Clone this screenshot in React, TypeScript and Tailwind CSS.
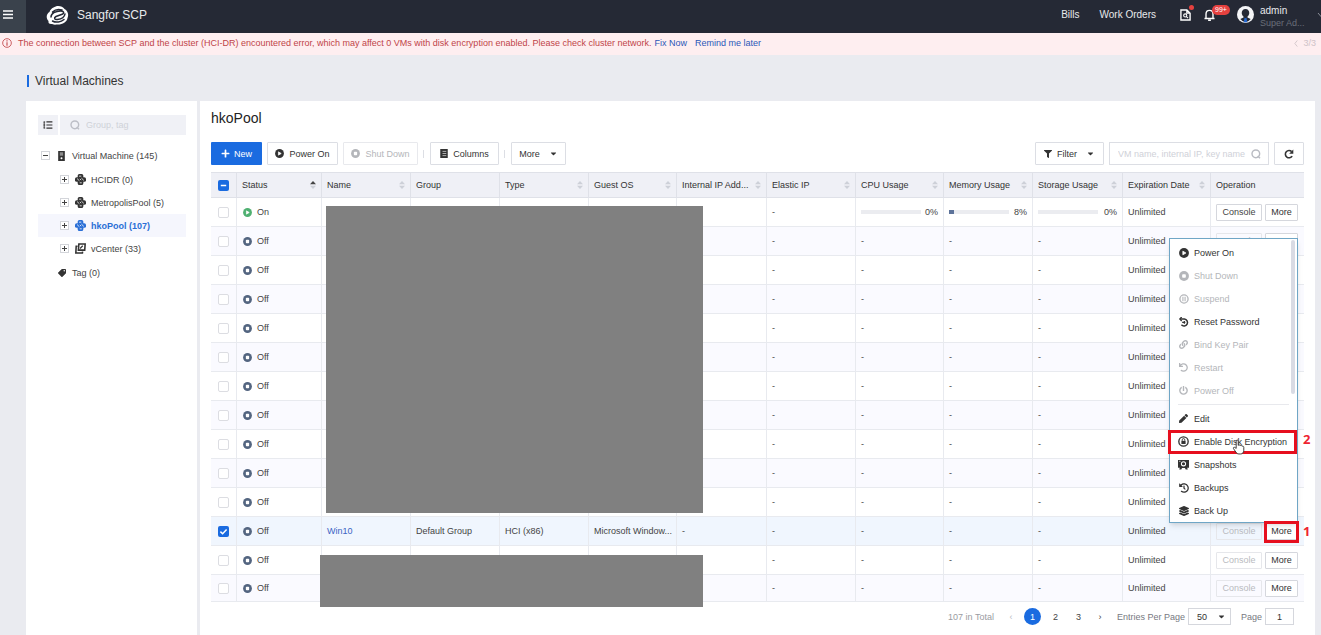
import React from "react";
import {
  FaCaretDown, FaFilter, FaHistory, FaLayerGroup, FaLink, FaPen, FaPlus,
  FaPowerOff, FaTag, FaUndo,
} from "react-icons/fa";

type IconProps = { className?: string };

const Logo = () => (
  <svg viewBox="0 0 46 40" className="h-5 w-6" aria-hidden="true">
    <path fill="#fff" d="M14 5C20 0 32 1 36 8c7 4 9 12 6 18-1 8-10 13-19 13-5 0-7 1-12-1-5 1-8-2-7-6C-1 27-1 18 6 14c1-4 4-7 8-9Z" />
    <path fill="none" stroke="#252935" strokeWidth="3" strokeLinecap="round" d="M9 24c0-7 9-12 19-12 8 0 8 5 2 7l-11 4c-5 3-3 7 3 6 8-1 14-5 15-11M12 14c5-5 13-6 19-4M12 32c7 4 17 2 23-3" />
  </svg>
);

const SearchIcon = ({ className }: IconProps) => (
  <svg viewBox="0 0 12 12" className={className} fill="none" stroke="currentColor" strokeWidth="1.7" aria-hidden="true">
    <circle cx="5.8" cy="5.8" r="4.6" />
    <path d="m8 8.400 2.800 2.600" />
  </svg>
);

const PlayDisc = ({ className }: IconProps) => (
  <svg viewBox="0 0 12 12" className={className} aria-hidden="true">
    <circle cx="6" cy="6" r="5.9" fill="currentColor" />
    <path d="M4.6 3.8v4.4L8.300 6Z" fill="#fff" stroke="#fff" strokeWidth=".9" strokeLinejoin="round" />
  </svg>
);

const StopDisc = ({ className }: IconProps) => (
  <svg viewBox="0 0 12 12" className={className} aria-hidden="true">
    <circle cx="6" cy="6" r="5.9" fill="currentColor" />
    <rect x="3.8" y="3.8" width="4.4" height="4.4" rx="1" fill="#fff" />
  </svg>
);

const PauseDisc = ({ className }: IconProps) => (
  <svg viewBox="0 0 12 12" className={className} fill="none" stroke="currentColor" aria-hidden="true">
    <circle cx="6" cy="6" r="4.9" strokeWidth="1.6" />
    <path d="M4.7 3.200v5.600M7.3 3.200v5.600" strokeWidth="1.3" />
  </svg>
);

const ResetIcon = ({ className }: IconProps) => (
  <svg viewBox="0 0 12 12" className={className} fill="none" stroke="currentColor" strokeWidth="1.8" aria-hidden="true">
    <path d="M1 2.400h5.500a4.200 4.200 0 1 1-3.600 7" />
    <path d="M3.200 0 .9 2.400l2.300 2.400" strokeWidth="1.500" />
    <path d="M3.800 6.300h3.800M6.400 4.700v3.400" strokeWidth="1.500" />
  </svg>
);

const LockDisc = ({ className }: IconProps) => (
  <svg viewBox="0 0 12 12" className={className} aria-hidden="true">
    <circle cx="6" cy="6" r="5.1" fill="none" stroke="currentColor" strokeWidth="1.5" />
    <rect x="3.7" y="5.3" width="4.6" height="3.4" fill="currentColor" />
    <path d="M4.6 5.3V4.2a1.4 1.4 0 0 1 2.8 0v1.1" fill="none" stroke="currentColor" strokeWidth="1" />
  </svg>
);

const SnapshotIcon = ({ className }: IconProps) => (
  <svg viewBox="0 0 12 12" className={className} aria-hidden="true">
    <path fill="currentColor" d="M0 1h12v8.600h-2l.7 1.800H8.400L7.600 9.800H4.400l-.8 1.600H1.300L2 9.600H0Z" />
    <circle cx="6" cy="5.2" r="2.3" fill="none" stroke="#fff" strokeWidth="1.1" />
    <path d="M1.200 2.500h1.500" stroke="#fff" strokeWidth=".8" />
  </svg>
);

const ColumnsIcon = ({ className }: IconProps) => (
  <svg viewBox="0 0 10 12" className={className} aria-hidden="true">
    <path fill="currentColor" d="M0 0h10v12H0Z" />
    <path d="M3 3.200h5M3 6h5M3 8.800h5" stroke="#fff" strokeWidth=".8" />
  </svg>
);

const RefreshIcon = ({ className }: IconProps) => (
  <svg viewBox="0 0 12 12" className={className} aria-hidden="true">
    <path d="M9.800 8.500A4.400 4.400 0 1 1 9.200 3.100" fill="none" stroke="currentColor" strokeWidth="1.9" />
    <path d="M11.200.6v5H6.200Z" fill="currentColor" />
  </svg>
);

const ServerIcon = ({ className }: IconProps) => (
  <svg viewBox="0 0 10 12" className={className} aria-hidden="true">
    <path fill="currentColor" d="M1 0h8v12H1Z" />
    <path d="M3 2.500h4M3 4.700h4" stroke="#fff" strokeWidth=".9" />
    <circle cx="5" cy="8.600" r="1.200" fill="#fff" />
  </svg>
);

const PoolIcon = ({ className }: IconProps) => (
  <svg viewBox="0 0 14 14" className={className} aria-hidden="true">
    <g fill="currentColor">
      <rect x="3.5" y="0" width="7" height="5.600" rx="2" />
      <rect x="3.5" y="8.400" width="7" height="5.600" rx="2" />
      <rect x="0" y="4" width="6" height="6" rx="2.200" />
      <rect x="8" y="4" width="6" height="6" rx="2.200" />
      <path d="M3.500 3.500h7v7h-7Z" />
    </g>
    <path d="M5.200 2.800 8 2.700M2.600 5.800l3 2.800M8.200 5.300l3 2.800M6 11.200h2.600M6.200 6.200l1.600 1.600" fill="none" stroke="#fff" strokeWidth="1" />
  </svg>
);

const CopiesIcon = ({ className }: IconProps) => (
  <svg viewBox="0 0 12 12" className={className} fill="none" stroke="currentColor" strokeWidth="1.700" aria-hidden="true">
    <path d="M4.200 1h6.900l-.5 6.800H3.700Z" />
    <path d="M2.800 3.600H1.300L.9 11h7.200l.2-1.600" />
    <path d="m5.500 6 3-3" strokeWidth="1.200" />
  </svg>
);

const TreeListIcon = ({ className }: IconProps) => (
  <svg viewBox="0 0 12 10" className={className} fill="none" stroke="currentColor" strokeWidth="1.500" aria-hidden="true">
    <path d="M4 1.200h7.500M4 5h7.500M4 8.800h7.500" />
    <path d="M.5 1.200h2M.5 5h2M.5 8.800h2M1.200 1v8" strokeWidth="1.200" />
  </svg>
);

const Expander = ({ open, label }: { open?: boolean; label: string }) => (
  <button type="button" aria-label={label} className="grid size-[9px] shrink-0 place-items-center border border-[#d3d5da] bg-white text-[#444]">
    <svg viewBox="0 0 7 7" className="size-[7px]" stroke="currentColor" aria-hidden="true">
      <path d={open ? "M1 3.500h5" : "M1 3.500h5M3.500 1v5"} />
    </svg>
  </button>
);

const Sorter = ({ active }: { active?: boolean }) => (
  <svg viewBox="0 0 6 8" className="h-2 w-1.5 shrink-0" aria-hidden="true">
    <path d="M0 3.200 3 0l3 3.200Z" fill={active ? "#444" : "#cdd0d8"} />
    <path d="M0 4.800 3 8l3-3.200Z" fill="#cdd0d8" />
  </svg>
);

const Check = ({ state, label }: { state: "off" | "on" | "mixed"; label: string }) => (
  <span className="relative ml-[7px] block size-[11px]">
    <input
      type="checkbox"
      aria-label={label}
      defaultChecked={state !== "off"}
      className={
        state === "off"
          ? "block size-[11px] appearance-none rounded-[2px] border border-[#dcdde2] bg-white"
          : "block size-[11px] appearance-none rounded-[2px] bg-[#1a6be0]"
      }
    />
    {state !== "off" && (
      <svg viewBox="0 0 11 11" className="pointer-events-none absolute inset-0 size-[11px]" fill="none" stroke="#fff" strokeWidth="1.500" aria-hidden="true">
        <path d={state === "on" ? "m2.400 5.600 2.200 2.100 4-4.300" : "M2.800 5.500h5.400"} />
      </svg>
    )}
  </span>
);

const Usage = ({ value }: { value: number }) => (
  <div className="flex items-center justify-between">
    <div className="h-1 w-[60px] bg-[#ebecf0]">
      <div className="h-full bg-[#5c7299]" style={{ width: `${value}%` }} />
    </div>
    <span>{value}%</span>
  </div>
);

const columns: { label: string; width: string; sort?: boolean; active?: boolean }[] = [
  { label: "Status", width: "w-[85px]", sort: true, active: true },
  { label: "Name", width: "w-[89px]", sort: true },
  { label: "Group", width: "w-[89px]" },
  { label: "Type", width: "w-[89px]", sort: true },
  { label: "Guest OS", width: "w-[88px]", sort: true },
  { label: "Internal IP Add...", width: "w-[90px]", sort: true },
  { label: "Elastic IP", width: "w-[89px]", sort: true },
  { label: "CPU Usage", width: "w-[88px]", sort: true },
  { label: "Memory Usage", width: "w-[89px]", sort: true },
  { label: "Storage Usage", width: "w-[90px]", sort: true },
  { label: "Expiration Date", width: "w-[88px]", sort: true },
  { label: "Operation", width: "w-[93px]" },
];

type Row = { on?: boolean; selected?: boolean; info?: string[]; usage?: number[] };
const off: Row = {};
const rows: Row[] = [
  { on: true, usage: [0, 8, 0] },
  off, off, off, off, off, off, off, off, off, off,
  { selected: true, info: ["Win10", "Default Group", "HCI (x86)", "Microsoft Window...", "-"] },
  off, off,
];

const cell = "whitespace-nowrap border-r border-b border-[#e8eaef] px-[5px]";

const VmRow = ({ row, index }: { row: Row; index: number }) => {
  const bg = row.selected ? "bg-[#f0f6fe]" : index % 2 ? "bg-[#fafaff]" : "bg-white";
  return (
    <tr className={`${bg} h-[29px] last:h-[27px]`}>
      <td className="border-r border-b border-[#e8eaef] p-0">
        <Check state={row.selected ? "on" : "off"} label={`Select row ${index + 1}`} />
      </td>
      <td className={cell}>
        <span className="flex items-center gap-[5px] pl-px">
          {row.on ? <PlayDisc className="size-[9px] text-[#4fb071]" /> : <StopDisc className="size-[9px] text-[#536580]" />}
          {row.on ? "On" : "Off"}
        </span>
      </td>
      {[0, 1, 2, 3, 4].map((i) => (
        <td key={i} className={cell}>
          {row.info && (i === 0 ? <a href="#vm" className="text-[#3b64c4]">{row.info[0]}</a> : row.info[i])}
        </td>
      ))}
      <td className={cell}>-</td>
      {[0, 1, 2].map((i) => (
        <td key={i} className={cell}>{row.usage ? <Usage value={row.usage[i]} /> : "-"}</td>
      ))}
      <td className={cell}>Unlimited</td>
      <td className="border-b border-[#e8eaef] px-[5px]">
        <div className="flex gap-[3px]">
          <button type="button" disabled={!row.on} className="h-[17px] w-[46px] rounded-[1px] border border-[#d5d7dd] bg-white text-[#444] disabled:border-[#e6e7eb] disabled:bg-transparent disabled:text-[#b9bbc0]">
            Console
          </button>
          <span className="relative">
            <button type="button" className="block h-[17px] w-[33px] rounded-[1px] border border-[#d5d7dd] bg-white text-[#333]">More</button>
            {row.selected && (
              <>
                <span className="absolute -inset-x-px -top-[2px] -bottom-[3px] z-20 border-[3px] border-[#e60f1e]" />
                <span className="absolute top-0 left-[38px] font-['Open_Sans',sans-serif] text-[13px] leading-4 font-bold text-[#ee2430]">1</span>
              </>
            )}
          </span>
        </div>
      </td>
    </tr>
  );
};

const menuTop: { label: string; icon: React.ReactNode; enabled?: boolean }[] = [
  { label: "Power On", icon: <PlayDisc className="size-[10px]" />, enabled: true },
  { label: "Shut Down", icon: <StopDisc className="size-[10px]" /> },
  { label: "Suspend", icon: <PauseDisc className="size-[10px]" /> },
  { label: "Reset Password", icon: <ResetIcon className="size-[10px]" />, enabled: true },
  { label: "Bind Key Pair", icon: <FaLink className="size-[9px]" /> },
  { label: "Restart", icon: <FaUndo className="size-[9px]" /> },
  { label: "Power Off", icon: <FaPowerOff className="size-[9px]" /> },
];
const menuBottom: { label: string; icon: React.ReactNode; marked?: boolean }[] = [
  { label: "Edit", icon: <FaPen className="size-[9px]" /> },
  { label: "Enable Disk Encryption", icon: <LockDisc className="size-[11px]" />, marked: true },
  { label: "Snapshots", icon: <SnapshotIcon className="size-[11px]" /> },
  { label: "Backups", icon: <FaHistory className="size-[10px]" /> },
  { label: "Back Up", icon: <FaLayerGroup className="size-[10px]" /> },
];

const menuItem = "flex h-[23px] w-full items-center gap-[5px] pl-2 text-left whitespace-nowrap text-[#333] disabled:text-[#b4b6ba]";

const MoreMenu = () => (
  <div className="absolute top-[66px] right-[6px] z-10 w-[129px] border border-[#6fa6c6] bg-white pt-[2px] shadow-md">
    {menuTop.map((m) => (
      <button key={m.label} type="button" disabled={!m.enabled} className={menuItem}>
        <span className="grid w-[11px] place-items-center">{m.icon}</span>
        {m.label}
      </button>
    ))}
    <hr className="mx-2 my-[2px] border-[#e8e9ed]" />
    {menuBottom.map((m) => (
      <div key={m.label} className="relative">
        <button type="button" className={menuItem}>
          <span className="grid w-[11px] place-items-center">{m.icon}</span>
          {m.label}
        </button>
        {m.marked && (
          <>
            <span className="absolute top-0 right-0 -bottom-px -left-[2px] border-[3px] border-[#e60f1e]" />
            <span className="absolute top-px left-[133px] font-['Open_Sans',sans-serif] text-[13px] leading-4 font-bold text-[#ee2430]">2</span>
            <svg viewBox="0 0 14 17" className="absolute top-[9px] left-[62px] z-10 h-[16px] w-[13px]" aria-hidden="true">
              <path d="M4.500 10V2.200c0-1.600 2.200-1.600 2.200 0v4.600c.5-.8 1.900-.7 2.100.3.700-.7 1.900-.3 2 .6.900-.5 1.900 0 1.900 1.100V12c0 2.600-1.400 4-3.600 4H7.400c-1.500 0-2.400-.7-3.200-2L1.600 10.300c-.7-1.200.7-2 1.600-1.200Z" fill="#fff" stroke="#333" />
            </svg>
          </>
        )}
      </div>
    ))}
    <span className="absolute top-px right-[2px] h-[154px] w-1 rounded-full bg-[#d9dbe4]" />
  </div>
);

const pools = [
  { label: "HCIDR (0)", Icon: PoolIcon },
  { label: "MetropolisPool (5)", Icon: PoolIcon },
  { label: "hkoPool (107)", Icon: PoolIcon, selected: true },
  { label: "vCenter (33)", Icon: CopiesIcon },
];

const toolButton = "flex h-[23px] items-center justify-center gap-[5px] rounded-[1px] border border-[#dcdee4] bg-white text-[#333] disabled:border-[#e8e9ed] disabled:text-[#b4b6ba]";

export default function App() {
  return (
    <div className="flex min-h-screen flex-col overflow-hidden bg-[#eaebf0] font-['Liberation_Sans',Arial,sans-serif] text-[9px] leading-3 text-[#444]">
      <header className="flex h-[33px] items-center overflow-hidden bg-[#252935] text-[10px] text-[#e8e9ec]">
        <button type="button" aria-label="Menu" className="grid h-full w-[26px] place-items-center bg-[#3a424c] pr-[10px] pb-1">
          <svg viewBox="0 0 10 9" className="h-[9px] w-[10px]" stroke="#fff" strokeWidth="1.400" aria-hidden="true">
            <path d="M0 1h10M0 4.500h10M0 8h10" />
          </svg>
        </button>
        <a href="#home" className="mb-1 ml-5 flex items-center gap-[7px] text-xs leading-4">
          <Logo />
          Sangfor SCP
        </a>
        <nav className="mb-1 ml-auto flex items-center">
          <a href="#bills">Bills</a>
          <a href="#orders" className="ml-5">Work Orders</a>
          <button type="button" aria-label="Tasks" className="relative ml-6">
            <svg viewBox="0 0 12 13" className="h-3 w-[11px]" fill="none" stroke="#fff" strokeWidth="1.500" aria-hidden="true">
              <path d="M1 1h6.500L11 4.500V12H1ZM7.500 1v3.500H11" />
              <circle cx="5.700" cy="7" r="1.700" strokeWidth="1.200" />
              <path d="m7 8.300 1.800 1.700" strokeWidth="1.200" />
            </svg>
            <span className="absolute -top-1 left-[9px] size-[5px] rounded-full bg-[#e5413f]" />
          </button>
          <button type="button" aria-label="Alerts" className="relative ml-[13px]">
            <svg viewBox="0 0 12 13" className="h-3 w-[11px]" fill="none" stroke="#fff" strokeWidth="1.500" aria-hidden="true">
              <path d="M.5 10.300h11M2.200 10V5.500C2.200 3 3.700 1.500 6 1.500S9.800 3 9.800 5.500V10M4.500 12.200h3" />
            </svg>
            <span className="absolute -top-1 left-2 h-[10px] w-[18px] rounded-full bg-[#e5413f] text-center text-[7px] leading-[10px] text-white">99+</span>
          </button>
          <a href="#account" className="ml-[22px] flex items-center gap-[6px]">
            <svg viewBox="0 0 18 18" className="size-[17px]" aria-hidden="true">
              <circle cx="9" cy="9" r="9" fill="#f4f5f7" />
              <path d="M9 3.200c2.600 0 4 1.800 4 4.200 0 1.600-.9 3-1.900 3.700v1.200l3.400 1.500A8.500 8.500 0 0 1 9 17.200a8.500 8.500 0 0 1-5.500-3.400l3.400-1.500v-1.200C5.900 10.400 5 9 5 7.400c0-2.400 1.400-4.200 4-4.200Z" fill="#252935" />
              <path d="m8 12.300 1 .7 1-.7.800 4.800H7.200Z" fill="#2467cf" />
            </svg>
            <span className="flex w-[46px] flex-col whitespace-nowrap pt-1">
              <span>admin</span>
              <span className="text-[9px] text-[#6a6f7a]">Super Ad...</span>
            </span>
          </a>
          <svg viewBox="0 0 8 6" className="-mr-1 ml-[11px] h-1.5 w-2" fill="none" stroke="#8b8f99" aria-hidden="true">
            <path d="m1 1 3 3.500L7 1" />
          </svg>
        </nav>
      </header>

      <div role="alert" className="flex h-[22px] items-center bg-[#feeef0] pr-[5px] pb-[2px] pl-[2px] text-[#c04448]">
        <svg viewBox="0 0 12 12" className="mr-[6px] size-[10px]" fill="none" stroke="currentColor" aria-hidden="true">
          <circle cx="6" cy="6" r="5.200" />
          <path d="M6 5v4.200M6 2.700v1.400" strokeWidth="1.300" />
        </svg>
        <span>
          The connection between SCP and the cluster (HCI-DR) encountered error, which may affect 0 VMs with disk encryption enabled. Please check cluster network.
        </span>
        <a href="#fix" className="ml-[3px] text-[#2b57b8]">Fix Now</a>
        <a href="#later" className="ml-2 text-[#2b57b8]">Remind me later</a>
        <span className="ml-auto flex items-center gap-[5px] text-[#cfc3c8]">
          <svg viewBox="0 0 4 8" className="h-[7px] w-1" fill="none" stroke="currentColor" aria-hidden="true"><path d="M3.500.500.700 4l2.800 3.500" /></svg>
          3/3
        </span>
      </div>

      <div className="flex h-[46px] items-center gap-[6px] pt-[6px] pl-[27px]">
        <span className="h-3 w-[2px] bg-[#1a6be0]" />
        <h1 className="text-xs leading-4 text-[#333]">Virtual Machines</h1>
      </div>

      <div className="flex grow gap-[3px] pr-[6px] pl-[26px]">
        <aside className="w-[171px] shrink-0 bg-white pt-[14px] pr-[11px] pl-3">
          <div className="flex gap-[2px]">
            <button type="button" aria-label="Toggle list" className="grid h-5 w-5 shrink-0 place-items-center bg-[#f0f1f6] text-[#333]">
              <TreeListIcon className="h-2 w-[10px]" />
            </button>
            <label className="flex h-5 grow items-center gap-[6px] bg-[#f0f1f6] pl-[10px]">
              <SearchIcon className="size-[10px] shrink-0 text-[#bcbec6]" />
              <input type="text" aria-label="Group, tag" placeholder="Group, tag" className="w-full min-w-0 bg-transparent outline-none placeholder:text-[#cfd1d8]" />
            </label>
          </div>
          <div className="mt-[9px]">
            <div className="flex h-[23px] items-center pl-[3px]">
              <Expander open label="Collapse Virtual Machine" />
              <ServerIcon className="ml-[7px] h-[10px] w-[9px] text-[#333]" />
              <span className="ml-[6px]">Virtual Machine (145)</span>
            </div>
            <ul className="py-px">
              {pools.map(({ label, Icon, selected }) => (
                <li key={label} className={selected ? "flex h-[23px] items-center bg-[#f5f6fd] pl-[22px] font-bold text-[#2a6fd6]" : "flex h-[23px] items-center pl-[22px]"}>
                  <Expander label={`Expand ${label}`} />
                  <Icon className={selected ? "ml-[6px] size-[11px]" : "ml-[6px] size-[11px] text-[#333]"} />
                  <span className="ml-[5px]">{label}</span>
                </li>
              ))}
            </ul>
            <div className="flex h-[23px] items-center pl-5">
              <FaTag className="size-[8px] rotate-90 text-[#333]" />
              <span className="ml-[6px]">Tag (0)</span>
            </div>
          </div>
        </aside>

        <main className="min-w-0 grow bg-white px-[11px] pt-[7px]">
          <h2 className="text-sm leading-5 text-[#222]">hkoPool</h2>
          <div className="mt-[14px] flex items-center gap-[5px]">
            <button type="button" className="flex h-[23px] w-[51px] items-center justify-center gap-1 rounded-[1px] bg-[#1a6be0] text-white">
              <FaPlus className="size-[9px]" />
              New
            </button>
            <button type="button" className={`${toolButton} w-[71px]`}><PlayDisc className="size-[9px]" />Power On</button>
            <button type="button" disabled className={`${toolButton} w-[75px]`}><StopDisc className="size-[9px]" />Shut Down</button>
            <span className="h-2 w-[2px] border-l border-[#dcdee4]" />
            <button type="button" className={`${toolButton} w-[69px]`}><ColumnsIcon className="h-[9px] w-2" />Columns</button>
            <span className="h-2 w-[2px] border-l border-[#dcdee4]" />
            <button type="button" className={`${toolButton} w-[55px]`}>More<FaCaretDown className="ml-1 size-[9px]" /></button>

            <button type="button" className={`${toolButton} ml-auto w-[69px]`}>
              <FaFilter className="size-2" />Filter<FaCaretDown className="ml-1 size-[9px]" />
            </button>
            <label className="flex h-[23px] w-40 items-center border border-[#dcdee4] pr-[7px] pl-2">
              <input type="text" aria-label="Search virtual machines" placeholder="VM name, internal IP, key name" className="w-full min-w-0 outline-none placeholder:text-[#cfd1d8]" />
              <SearchIcon className="size-[10px] shrink-0 text-[#b9bbc2]" />
            </label>
            <button type="button" aria-label="Refresh" className={`${toolButton} w-[30px]`}><RefreshIcon className="size-[10px]" /></button>
          </div>

          <div className="relative mt-[7px]">
            <table className="w-full table-fixed border-separate border-spacing-0">
              <thead>
                <tr className="h-[26px] bg-[#eff0f6] text-left text-[#333]">
                  <th className="w-[26px] border-t border-r border-b border-[#dfe1e8] p-0">
                    <Check state="mixed" label="Select all" />
                  </th>
                  {columns.map((c) => (
                    <th key={c.label} className={`${c.width} border-t border-r border-b border-[#dfe1e8] px-[5px] font-normal last:border-r-0`}>
                      <span className="flex items-center justify-between whitespace-nowrap">
                        {c.label}
                        {c.sort && <Sorter active={c.active} />}
                      </span>
                    </th>
                  ))}
                </tr>
              </thead>
              <tbody>
                {rows.map((row, i) => <VmRow key={i} row={row} index={i} />)}
              </tbody>
            </table>
            <div className="absolute top-[34px] left-[115px] h-[307px] w-[377px] bg-[#808080]" />
            <div className="absolute top-[383px] left-[109px] h-[52px] w-[383px] bg-[#808080]" />
            <MoreMenu />
          </div>

          <div className="flex items-center justify-end pt-[6px] pr-[10px] pb-2">
            <span className="text-[#9a9ca2]">107 in Total</span>
            <button type="button" aria-label="Previous page" className="ml-[13px] w-2 text-[#b9bbc2]">‹</button>
            <button type="button" aria-current="page" className="ml-[9px] size-[17px] rounded-full bg-[#1a6be0] text-white">1</button>
            <button type="button" className="ml-[6px] w-[17px]">2</button>
            <button type="button" className="ml-[6px] w-[17px]">3</button>
            <button type="button" aria-label="Next page" className="ml-[9px] w-2">›</button>
            <label htmlFor="per-page" className="ml-[13px] text-[#77797f]">Entries Per Page</label>
            <span className="relative ml-[3px]">
              <select id="per-page" defaultValue="50" className="block h-[17px] w-[43px] appearance-none border border-[#d5d7dd] bg-white pl-2 text-[#333]">
                <option>50</option>
                <option>100</option>
              </select>
              <FaCaretDown className="pointer-events-none absolute top-1 right-[5px] size-[9px] text-[#333]" />
            </span>
            <label htmlFor="page" className="ml-[10px] text-[#77797f]">Page</label>
            <input id="page" type="text" defaultValue="1" className="ml-[3px] h-[17px] w-[29px] border border-[#d5d7dd] text-center text-[#333]" />
          </div>
        </main>
      </div>
    </div>
  );
}
